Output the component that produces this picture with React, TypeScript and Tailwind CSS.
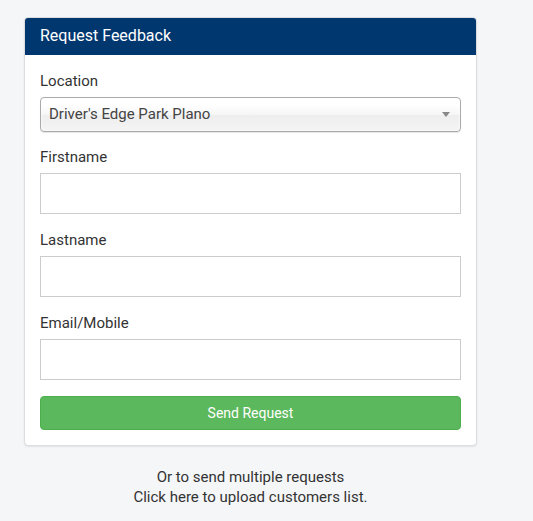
import React from "react";

function Field({ label, first }: { label: string; first?: boolean }) {
  return (
    <div className={first ? "mt-[15px]" : "mt-[16px]"}>
      <div className="text-[15px] leading-5 text-[#333]">{label}</div>
      <input className="mt-[6px] block h-[41px] w-full border border-[#ccc] bg-white px-3 outline-none" />
    </div>
  );
}

export default function App() {
  return (
    <div
      className="min-h-[521px] w-full bg-[#f5f6f8] pt-[17px]"
      style={{ fontFamily: "Roboto, 'Liberation Sans', sans-serif" }}
    >
      <div className="ml-[24px] w-[453px]">
        <div className="overflow-hidden rounded-[4px] border border-[#dcdde0] bg-white shadow-[0_1px_2px_rgba(0,0,0,0.08)]">
          <div className="-mt-px flex h-[38px] items-center bg-[#00376f] px-[15px] text-[16px] text-white">
            Request Feedback
          </div>
          <div className="px-[15px] pb-[15px] pt-[16px]">
            <div>
              <div className="text-[15px] leading-5 text-[#333]">Location</div>
              <div className="mt-[6px] flex h-[35px] items-center justify-between rounded-[4px] border border-[#aaa] bg-[linear-gradient(to_bottom,#ffffff_20%,#f6f6f6_50%,#eeeeee_52%,#f4f4f4_100%)] pl-[8px] pr-[10px] shadow-[0_0_3px_#fff_inset,0_1px_1px_rgba(0,0,0,0.1)]">
                <span className="text-[15px] text-[#444]">Driver's Edge Park Plano</span>
                <span className="h-0 w-0 border-x-[4px] border-t-[5px] border-x-transparent border-t-[#888]" />
              </div>
            </div>
            <Field label="Firstname" first />
            <Field label="Lastname" />
            <Field label="Email/Mobile" />
            <button className="mt-[16px] flex h-[34px] w-full items-center justify-center rounded-[4px] border border-[#4cae4c] bg-[#5cb85c] text-[14px] text-white">
              Send Request
            </button>
          </div>
        </div>
        <div className="mt-[21px] text-center text-[15px] leading-5 text-[#333]">
          <div>Or to send multiple requests</div>
          <div>Click here to upload customers list.</div>
        </div>
      </div>
    </div>
  );
}
